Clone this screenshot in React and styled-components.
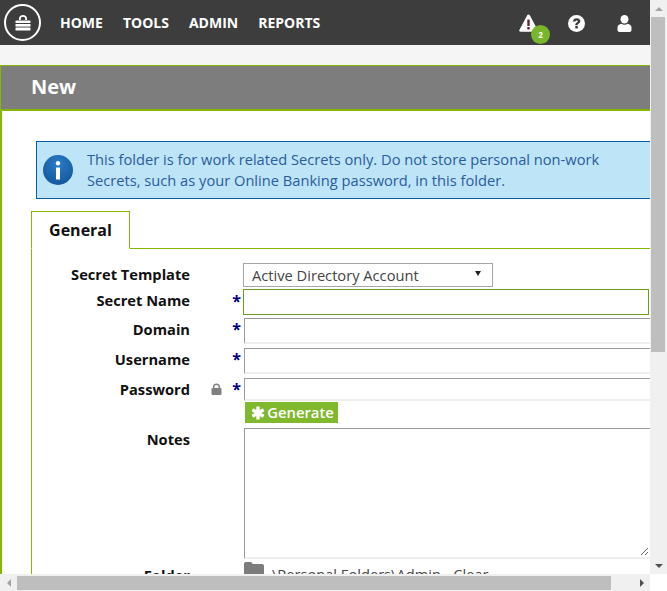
import React from 'react';
import styled, { createGlobalStyle } from 'styled-components';

const Global = createGlobalStyle`
  html, body { margin: 0; padding: 0; overflow: hidden; background: #fff; }
  * { box-sizing: border-box; }
`;

const Shell = styled.div`
  position: relative;
  width: 667px;
  height: 591px;
  display: grid;
  grid-template-columns: 650px 17px;
  grid-template-rows: 574px 17px;
  font-family: "Open Sans", sans-serif;
  color: #111;
`;
const Page = styled.main`
  overflow: hidden;
  min-width: 0;
  min-height: 0;
`;
const Header = styled.header`
  height: 45px;
  background: #3d3d3d;
  display: flex;
  align-items: center;
  padding-left: 4px;
`;
const Logo = styled.div`
  width: 37px;
  height: 37px;
  border: 2.5px solid #fff;
  border-radius: 50%;
  display: flex;
  align-items: center;
  justify-content: center;
  margin-right: 19px;
`;
const Nav = styled.nav`
  display: flex;
  gap: 20px;
`;
const NavItem = styled.a`
  color: #fff;
  font-weight: 700;
  font-size: 14px;
  line-height: 18px;
`;
const HeaderIcons = styled.div`
  margin-left: auto;
  display: flex;
  align-items: center;
  padding-right: 16px;
`;
const HeaderIcon = styled.div`
  position: relative;
  width: 20px;
  height: 20px;
  margin-left: ${p => p.$gap}px;
  padding-top: ${p => p.$pt || 0}px;
  display: flex;
  align-items: center;
  justify-content: center;
`;
const Badge = styled.span`
  position: absolute;
  left: 13px;
  top: 12px;
  width: 19px;
  height: 19px;
  border-radius: 50%;
  background: #7ab62d;
  color: #fff;
  font-size: 8px;
  font-weight: 700;
  line-height: 19px;
  text-align: center;
`;
const Strip = styled.div`
  height: 20px;
  background: #f5f5f5;
`;
const Panel = styled.section`
  border-left: 2px solid #84b800;
  height: 509px;
`;
const TitleBar = styled.div`
  height: 46px;
  margin-left: -2px;
  background: #7d7d7d;
  border: solid #84b800;
  border-width: 1px 0 2px 1px;
  padding: 0 0 2px 30px;
  display: flex;
  align-items: center;
  color: #fff;
  font-size: 20px;
  font-weight: 700;
`;
const Body = styled.div`
  padding: 30px 0 0 29px;
`;
const Alert = styled.div`
  margin-left: 5px;
  height: 58px;
  background: #bde4f7;
  border: solid #0a5aa5;
  border-width: 1px 0 1px 1px;
  display: flex;
  align-items: center;
  padding-left: 6px;
  color: #2b5c9c;
  font-size: 14.67px;
  line-height: 21px;
  white-space: nowrap;
`;
const AlertIcon = styled.div`
  width: 30px;
  height: 30px;
  flex: none;
  border-radius: 50%;
  background: radial-gradient(circle at 50% 30%, #2a7cc6, #0f4f95);
  display: flex;
  align-items: center;
  justify-content: center;
  margin-right: 14px;
`;
const Tabs = styled.div`
  margin-top: 12px;
  height: 38px;
  border-bottom: 1px solid #84b800;
  display: flex;
`;
const Tab = styled.div`
  width: 99px;
  height: 38px;
  background: #fff;
  border: 1px solid #84b800;
  border-bottom: 1px solid #fff;
  display: flex;
  align-items: center;
  justify-content: center;
  font-size: 16px;
  font-weight: 700;
`;
const TabBody = styled.div`
  border-left: 1px solid #84b800;
  padding-top: 14px;
  height: 340px;
`;
const Form = styled.div`
  display: grid;
  grid-template-columns: 158px 54px 1fr;
  align-items: start;
`;
const Row = styled.div`
  display: contents;
`;
const Label = styled.label`
  font-size: 14.67px;
  font-weight: 700;
  line-height: 20px;
  text-align: right;
  height: ${p => p.$h}px;
  padding-top: ${p => p.$pt || 0}px;
`;
const Marks = styled.div`
  display: flex;
  justify-content: flex-end;
  align-items: flex-start;
  gap: 10px;
  color: #000080;
  font-size: 16px;
  font-weight: 700;
  line-height: 20px;
  padding: ${p => p.$pt || 0}px 3px 0 0;
`;
const LockSlot = styled.span`
  margin-top: 4px;
  display: flex;
`;
const Select = styled.div`
  margin-left: -1px;
  width: 250px;
  height: 24px;
  border: 1px solid #a6a6a6;
  display: flex;
  align-items: center;
  justify-content: space-between;
  padding: 0 11px 0 8px;
  font-size: 14.67px;
  color: #444;
`;
const Caret = styled.span`
  width: 0;
  height: 0;
  margin-top: -4px;
  border: 3.5px solid transparent;
  border-top: 5px solid #222;
  border-bottom: 0;
`;
const Input = styled.div`
  height: ${p => p.$h}px;
  margin-left: ${p => (p.$focus ? -1 : 0)}px;
  margin-right: ${p => (p.$focus ? 1 : 0)}px;
  border-style: solid;
  border-width: ${p => (p.$focus ? '1px' : '1px 0 2px 1px')};
  border-color: ${p => (p.$focus ? '#6e9a1d' : '#9a9a9a #eee #eee #9a9a9a')};
  background: #fff;
`;
const Generate = styled.button`
  margin: 0 0 0 1px;
  width: 93px;
  height: 21px;
  border: 0;
  padding: 0 0 0 2px;
  background: #80b82e;
  color: #fff;
  font: 600 14.8px/21px "Open Sans", sans-serif;
  display: flex;
  align-items: center;
  justify-content: center;
  gap: 2px;
`;
const TextArea = styled.div`
  position: relative;
  height: 131px;
  margin: 5px 0 0;
  border-style: solid;
  border-width: 1px 0 2px 1px;
  border-color: #9a9a9a #eee #eee #9a9a9a;
`;
const Grip = styled.svg`
  position: absolute;
  right: 1px;
  bottom: 1px;
`;
const FolderValue = styled.div`
  display: flex;
  align-items: flex-start;
  gap: 8px;
  margin-top: 3px;
  font-size: 14.67px;
  line-height: 20px;
  color: #444;
  white-space: nowrap;
`;
const FolderText = styled.span`
  margin-top: 2px;
`;
const VBar = styled.div`
  background: #f0f0f0;
  display: flex;
  flex-direction: column;
  align-items: center;
`;
const HBar = styled.div`
  background: #f0f0f0;
  display: flex;
  align-items: center;
`;
const Corner = styled.div`
  background: #fff;
`;
const ArrowBox = styled.div`
  flex: none;
  width: 17px;
  height: 17px;
  display: flex;
  align-items: center;
  justify-content: center;
`;
const Arrow = styled.span`
  width: 0;
  height: 0;
  border: solid transparent;
  ${p => p.$dir === 'up' && `border-width: 0 4px 4px; border-bottom-color: ${p.$c};`}
  ${p => p.$dir === 'down' && `border-width: 4px 4px 0; border-top-color: ${p.$c};`}
  ${p => p.$dir === 'left' && `border-width: 4px 4px 4px 0; border-right-color: ${p.$c};`}
  ${p => p.$dir === 'right' && `border-width: 4px 0 4px 4px; border-left-color: ${p.$c};`}
`;
const Thumb = styled.div`
  background: #bebebe;
  ${p => p.$v ? 'width: 14px; height: 335px; margin-left: 1px; align-self: flex-start;' : 'height: 14px; width: 594px;'}
`;
const Track = styled.div`
  flex: 1;
  width: 100%;
`;

const LockLogo = () => (
  <svg width="18" height="17" viewBox="0 0 18 17" fill="#fff">
    <path d="M5 6V4.5C5 2.300 6.800 1 9 1s4 1.300 4 3.500V6h-1.800V4.600C11.200 3.400 10.200 2.700 9 2.700S6.800 3.400 6.800 4.600V6z" />
    <rect x="1.500" y="6.500" width="15" height="2.600" rx=".4" />
    <rect x="1.500" y="10" width="15" height="2.600" />
    <rect x="1.500" y="13.500" width="15" height="3" rx=".6" />
  </svg>
);
const WarnIcon = () => (
  <svg width="19" height="18" viewBox="0 0 19 18">
    <path d="M9.500 0.500c.6 0 1 .3 1.300.8l7.800 14.600c.5.9-.1 1.800-1 1.800H1.400c-1 0-1.600-.9-1-1.800L8.200 1.300c.3-.5.7-.8 1.300-.8z" fill="#fff" />
    <rect x="8.300" y="5.500" width="2.400" height="6.500" rx=".6" fill="#5a2a2e" />
    <rect x="8.300" y="13" width="2.400" height="2.400" rx=".5" fill="#5a2a2e" />
  </svg>
);
const HelpIcon = () => (
  <svg width="17" height="17" viewBox="0 0 17 17">
    <circle cx="8.500" cy="8.500" r="8.500" fill="#fff" />
    <path d="M4.900 6.400C5.200 4.300 6.700 3.300 8.700 3.300c2.100 0 3.600 1.200 3.600 2.900 0 1.300-.8 2-1.700 2.600-.7.400-.9.700-.9 1.500H7.300c0-1.500.5-2.200 1.400-2.800.7-.4 1.100-.7 1.100-1.200s-.5-.9-1.100-.9c-.7 0-1.100.4-1.300 1.100z" fill="#3d3d3d" />
    <rect x="7.300" y="11" width="2.500" height="2.500" fill="#3d3d3d" />
  </svg>
);
const UserIcon = () => (
  <svg width="15" height="17" viewBox="0 0 15 17" fill="#fff">
    <ellipse cx="7.500" cy="4.300" rx="4" ry="4.300" />
    <path d="M0.500 15V12.500C0.500 10.300 2.500 9 4.300 8.700c1.900 1.300 4.500 1.300 6.400 0C12.500 9 14.500 10.300 14.500 12.500V15c0 1.200-1 2-2 2H2.500C1.500 17 .5 16.200 .5 15z" />
  </svg>
);
const InfoGlyph = () => (
  <svg width="6" height="19" viewBox="0 0 6 19" fill="#fff">
    <circle cx="3" cy="2.200" r="2.200" />
    <path d="M1 6.500h4v12H1z" />
  </svg>
);
const AsteriskGlyph = () => (
  <svg width="14" height="14" viewBox="0 0 14 14" fill="#fff">
    <rect x="5.300" y="0.500" width="3.400" height="13" rx=".6" />
    <rect x="5.300" y="0.500" width="3.400" height="13" rx=".6" transform="rotate(60 7 7)" />
    <rect x="5.300" y="0.500" width="3.400" height="13" rx=".6" transform="rotate(120 7 7)" />
  </svg>
);
const SmallLock = () => (
  <svg width="11" height="12" viewBox="0 0 11 12" fill="#808080">
    <path d="M2 5V3.500C2 1.500 3.500.5 5.500.5S9 1.500 9 3.500V5H7.500V3.500c0-1-.9-1.500-2-1.500s-2 .5-2 1.500V5z" />
    <rect x=".5" y="5" width="10" height="7" rx="1" />
  </svg>
);
const FolderGlyph = () => (
  <svg width="20" height="16" viewBox="0 0 20 16" fill="#7c7c7c">
    <path d="M0 2c0-1 .6-2 1.600-2h5c1 0 1.500 1 2 2H18c1 0 2 .7 2 2v10c0 1-1 2-2 2H2c-1 0-2-1-2-2z" />
  </svg>
);

const App = () => (
  <>
    <Global />
    <Shell>
      <Page>
        <Header>
          <Logo><LockLogo /></Logo>
          <Nav>
            <NavItem>HOME</NavItem>
            <NavItem>TOOLS</NavItem>
            <NavItem>ADMIN</NavItem>
            <NavItem>REPORTS</NavItem>
          </Nav>
          <HeaderIcons>
            <HeaderIcon $gap={0}><WarnIcon /><Badge>2</Badge></HeaderIcon>
            <HeaderIcon $gap={28} $pt={2}><HelpIcon /></HeaderIcon>
            <HeaderIcon $gap={28} $pt={2}><UserIcon /></HeaderIcon>
          </HeaderIcons>
        </Header>
        <Strip />
        <Panel>
          <TitleBar>New</TitleBar>
          <Body>
            <Alert>
              <AlertIcon><InfoGlyph /></AlertIcon>
              <span>This folder is for work related Secrets only. Do not store personal non-work<br />Secrets, such as your Online Banking password, in this folder.</span>
            </Alert>
            <Tabs><Tab>General</Tab></Tabs>
            <TabBody>
              <Form>
                <Row>
                  <Label $h={26} $pt={1}>Secret Template</Label>
                  <Marks />
                  <Select>Active Directory Account<Caret /></Select>
                </Row>
                <Row>
                  <Label $h={29} $pt={1}>Secret Name</Label>
                  <Marks $pt={2}>*</Marks>
                  <Input $focus $h={26} />
                </Row>
                <Row>
                  <Label $h={30} $pt={1}>Domain</Label>
                  <Marks $pt={1}>*</Marks>
                  <Input $h={26} />
                </Row>
                <Row>
                  <Label $h={30} $pt={1}>Username</Label>
                  <Marks $pt={1}>*</Marks>
                  <Input $h={26} />
                </Row>
                <Row>
                  <Label $h={24} $pt={1}>Password</Label>
                  <Marks $pt={1}><LockSlot><SmallLock /></LockSlot>*</Marks>
                  <Input $h={23} />
                </Row>
                <Row>
                  <span />
                  <span />
                  <Generate><AsteriskGlyph />Generate</Generate>
                </Row>
                <Row>
                  <Label $h={136} $pt={6}>Notes</Label>
                  <span />
                  <TextArea>
                    <Grip width="9" height="9" viewBox="0 0 9 9" stroke="#666" strokeWidth="1">
                      <path d="M1 8 8 1M5 8 8 5" />
                    </Grip>
                  </TextArea>
                </Row>
                <Row>
                  <Label $h={24} $pt={6}>Folder</Label>
                  <span />
                  <FolderValue><FolderGlyph /><FolderText>\Personal Folders\Admin - Clear</FolderText></FolderValue>
                </Row>
              </Form>
            </TabBody>
          </Body>
        </Panel>
      </Page>
      <VBar>
        <ArrowBox><Arrow $dir="up" $c="#a3a3a3" /></ArrowBox>
        <Thumb $v />
        <Track />
        <ArrowBox><Arrow $dir="down" $c="#505050" /></ArrowBox>
      </VBar>
      <HBar>
        <ArrowBox><Arrow $dir="left" $c="#a3a3a3" /></ArrowBox>
        <Thumb />
        <Track />
        <ArrowBox><Arrow $dir="right" $c="#505050" /></ArrowBox>
      </HBar>
      <Corner />
    </Shell>
  </>
);

export default App;
